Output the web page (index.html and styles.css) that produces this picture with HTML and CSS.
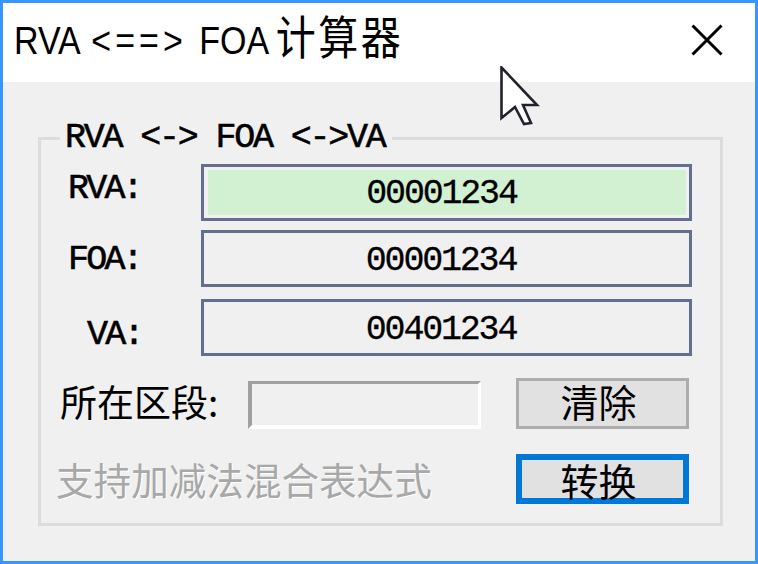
FILE: index.html
```html
<!DOCTYPE html>
<html lang="zh-CN">
<head>
    <meta charset="UTF-8">
    <meta name="viewport" content="width=device-width, initial-scale=1.0">
    <title>RVA FOA 计算器</title>
    <link rel="stylesheet" href="styles.css">
</head>
<body>

<div class="window">
    <div class="title-bar">
        <span class="title-text">RVA <span class="title-arrow">&lt;==&gt;</span> FOA <span class="title-cjk">计算器</span></span>
        <svg class="close-icon" width="32" height="32" viewBox="0 0 32 32">
            <path d="M1.5 1.5 L30.5 30.5 M30.5 1.5 L1.5 30.5" stroke="#000" stroke-width="3" fill="none"/>
        </svg>
    </div>
    <div class="client">
        <fieldset class="group">
            <legend class="group-title">RVA &lt;-&gt; FOA &lt;-&gt;VA</legend>
            <div class="rows">
                <div class="row">
                    <label class="row-label label-rva">RVA:</label>
                    <div class="field field-active">00001234</div>
                </div>
                <div class="row">
                    <label class="row-label label-foa">FOA:</label>
                    <div class="field">00001234</div>
                </div>
                <div class="row row-last">
                    <label class="row-label label-va">VA:</label>
                    <div class="field">00401234</div>
                </div>
            </div>
            <div class="section-row">
                <span class="section-label">所在区段:</span>
                <div class="section-box"></div>
                <button type="button" class="btn">清除</button>
            </div>
            <div class="hint-row">
                <span class="hint">支持加减法混合表达式</span>
                <button type="button" class="btn btn-default">转换</button>
            </div>
        </fieldset>
    </div>
</div>

<svg class="cursor" width="40" height="62" viewBox="0 0 40 62">
    <path d="M1.5 1.5 L1.5 52 L15 41 L24 58 L31 57 L23 39 L37 39 Z" fill="#fff" stroke="#22222e" stroke-width="2.6"/>
</svg>

</body>
</html>
```

FILE: styles.css
```css
html, body {
    margin: 0;
    padding: 0;
    background: #f0f0f0;
}

.window {
    width: 758px;
    height: 564px;
    box-sizing: border-box;
    border: 3px solid #3a96ff;
    background: #f0f0f0;
    display: flex;
    flex-direction: column;
    overflow: hidden;
}

.title-bar {
    height: 79px;
    background: #fff;
    display: flex;
    align-items: center;
    justify-content: space-between;
    padding: 0 32px 5px 11px;
    box-sizing: border-box;
}

.title-text {
    font-family: "Liberation Sans", "Noto Sans CJK SC", sans-serif;
    font-size: 34px;
    color: #000;
    white-space: nowrap;
    word-spacing: 3px;
    margin-bottom: 12px;
    transform: scaleY(1.15);
}

.title-arrow {
    letter-spacing: 4px;
}

.title-cjk {
    font-size: 40px;
    letter-spacing: 2.5px;
    margin-left: -4px;
}

.client {
    flex: 1;
    padding: 41px 32px 35px 35px;
    box-sizing: border-box;
    display: flex;
}

.group {
    flex: 1;
    margin: 0;
    border: 3px solid #dcdcdc;
    padding: 0 25px 0 19px;
    min-width: 0;
    display: flex;
    flex-direction: column;
}

.group-title {
    font-family: "Liberation Mono", "Noto Sans CJK SC", monospace;
    font-size: 35px;
    letter-spacing: -2.2px;
    -webkit-text-stroke: 0.6px #000;
    line-height: 30px;
    color: #000;
    padding: 0 7px 0 5px;
    margin-left: 0;
}

.rows {
    display: flex;
    flex-direction: column;
    gap: 9px;
    margin-top: 11px;
}

.row {
    display: flex;
    align-items: center;
}

.row-last {
    margin-top: 3px;
}

.row-label {
    flex: none;
    box-sizing: border-box;
    width: 141px;
    font-family: "Liberation Mono", monospace;
    font-size: 35px;
    letter-spacing: -2.8px;
    -webkit-text-stroke: 0.6px #000;
    color: #000;
}

.label-rva { padding-left: 8px; margin-top: -8px; }
.label-foa { padding-left: 8px; margin-top: 3px; }
.label-va { padding-left: 27px; margin-top: 14px; }

.field {
    flex: none;
    width: 491px;
    height: 57px;
    box-sizing: border-box;
    border: 3px solid #646e91;
    background: #f0f0f0;
    font-family: "Liberation Mono", monospace;
    font-size: 35px;
    letter-spacing: -2.2px;
    -webkit-text-stroke: 0.3px #000;
    line-height: 57px;
    text-align: center;
    text-indent: -11px;
    color: #000;
}

.field-active {
    background: #d2f0d2;
    background-clip: content-box;
    padding: 3px 3px 3px 4px;
    line-height: 49px;
}

.section-row {
    display: flex;
    align-items: center;
    margin-top: 22px;
}

.section-label {
    flex: none;
    width: 188px;
    font-family: "Noto Sans CJK SC", sans-serif;
    font-size: 37px;
    line-height: 44px;
    padding-bottom: 6px;
    color: #000;
    white-space: nowrap;
}

.section-box {
    flex: none;
    width: 233px;
    height: 48px;
    margin-top: 3px;
    box-sizing: border-box;
    border-style: solid;
    border-width: 3px 3px 4px 4px;
    border-color: #a0a0a0 #fff #fff #a0a0a0;
    margin-right: 35px;
}

.btn {
    flex: none;
    width: 173px;
    height: 51px;
    box-sizing: border-box;
    border: 3px solid #adadad;
    background: #e1e1e1;
    padding: 0 8px 6px 0;
    font-family: "Noto Sans CJK SC", sans-serif;
    font-size: 38px;
    line-height: 40px;
    color: #000;
}

.hint-row {
    display: flex;
    align-items: center;
    margin-top: 25px;
    margin-left: -4px;
}

.hint {
    flex: none;
    width: 460px;
    font-family: "Noto Sans CJK SC", sans-serif;
    font-size: 37.6px;
    line-height: 50px;
    color: #a8a8a8;
    text-shadow: 1px 1px 0 #fff;
    white-space: nowrap;
}

.btn-default {
    height: 50px;
    border: 6px solid #0078d7;
    padding: 0 8px 4px 0;
}

.cursor {
    position: absolute;
    left: 500px;
    top: 66px;
}
```
